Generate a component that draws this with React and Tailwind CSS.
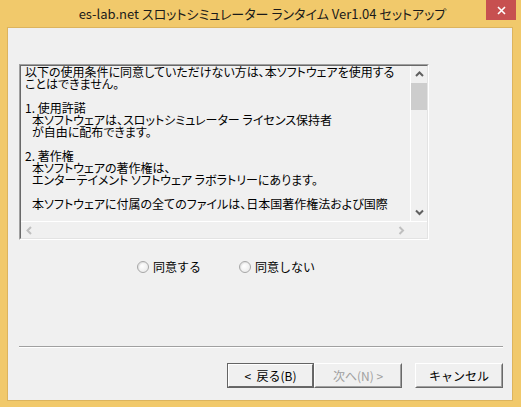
import React from "react";

const jp = { fontFamily: '"Noto Sans CJK JP", "Noto Sans", sans-serif' };

function Chevron({ dir, color }) {
  const paths = {
    up: "M1 5 L4.5 1.5 L8 5",
    down: "M1 1.5 L4.5 5 L8 1.5",
    left: "M5 1 L1.5 4.5 L5 8",
    right: "M1.5 1 L5 4.5 L1.5 8",
  };
  const vert = dir === "up" || dir === "down";
  return (
    <svg width={vert ? 9 : 7} height={vert ? 7 : 9} viewBox={vert ? "0 0 9 7" : "0 0 7 9"}>
      <path d={paths[dir]} fill="none" stroke={color} strokeWidth="2" />
    </svg>
  );
}

function Radio({ label }) {
  return (
    <div className="flex items-center gap-[4px]">
      <div className="w-[12px] h-[12px] rounded-full border border-[#a7a7a7] bg-[radial-gradient(circle_at_40%_40%,#ffffff,#e6e6e6)] shadow-[inset_1px_1px_1px_rgba(0,0,0,0.08)]" />
      <span className="text-[12px] leading-[14px] text-black">{label}</span>
    </div>
  );
}

function Button({ children, variant }) {
  if (variant === "default") {
    return (
      <div className="w-[87px] h-[25px] border border-[#646464]">
        <div className="w-full h-full border border-t-white border-l-white border-r-[#696969] border-b-[#696969] bg-[#f0f0f0] flex items-center justify-center text-[12px] text-black whitespace-pre">
          {children}
        </div>
      </div>
    );
  }
  const disabled = variant === "disabled";
  return (
    <div className="w-[88px] h-[25px] border border-t-white border-l-white border-r-[#696969] border-b-[#696969]">
      <div className={`w-full h-full border border-t-[#f0f0f0] border-l-[#f0f0f0] border-r-[#a0a0a0] border-b-[#a0a0a0] bg-[#f0f0f0] flex items-center justify-center text-[12px] whitespace-pre ${disabled ? "text-[#a0a0a0]" : "text-black"}`}>
        {children}
      </div>
    </div>
  );
}

export default function App() {
  const lines = [
    "以下の使用条件に同意していただけない方は、本ソフトウェアを使用する",
    "ことはできません。",
    "",
    "1. 使用許諾",
    " 本ソフトウェアは、スロットシミュレーター ライセンス保持者",
    " が自由に配布できます。",
    "",
    "2. 著作権",
    " 本ソフトウェアの著作権は、",
    " エンターテイメント ソフトウェア ラボラトリーにあります。",
    "",
    " 本ソフトウェアに付属の全てのファイルは、日本国著作権法および国際",
  ];
  return (
    <div className="w-[521px] h-[407px] bg-[#f1c96b] flex flex-col overflow-hidden" style={jp}>
      {/* Title bar */}
      <div className="h-[27px] relative flex items-center justify-center">
        <span className="text-[13px] text-[#1a1a1a] [font-feature-settings:'palt'] leading-none pb-[1px] pl-[4px]">
          es-lab.net スロットシミュレーター ランタイム Ver1.04 セットアップ
        </span>
        <div className="absolute right-[5px] top-0 w-[30px] h-[20px] bg-[#c75050] flex items-center justify-center">
          <svg width="9" height="9" viewBox="0 0 9 9">
            <path d="M1 1 L8 8 M8 1 L1 8" stroke="white" strokeWidth="1.6" />
          </svg>
        </div>
      </div>

      {/* Client */}
      <div className="ml-[7px] mr-[8px] h-[374px] border border-[#dcb45e] bg-[#f0f0f0] flex flex-col">
        <div className="pl-[11px] pt-[36px]">
          {/* Text box */}
          <div className="w-[410px] h-[176px] border border-t-[#a0a0a0] border-l-[#a0a0a0] border-r-white border-b-white">
            <div className="w-full h-full border border-t-[#696969] border-l-[#696969] border-r-[#e3e3e3] border-b-[#e3e3e3] flex flex-col">
              <div className="flex flex-1 min-h-0">
                <div className="flex-1 pl-[4px] pt-0 overflow-hidden bg-[#f0f0f0]">
                  {lines.map((l, i) => (
                    <div
                      key={i}
                      className={`h-[12px] text-[12px] leading-[12px] whitespace-pre text-black [font-feature-settings:'palt'] ${l.startsWith(" ") ? "pl-[7px]" : ""}`}
                    >
                      {l.trimStart() || "\u00a0"}
                    </div>
                  ))}
                </div>
                {/* vertical scrollbar */}
                <div className="w-[17px] bg-[#f0f0f0] border-l border-white flex flex-col">
                  <div className="h-[17px] flex items-center justify-center">
                    <Chevron dir="up" color="#606060" />
                  </div>
                  <div className="h-[27px] bg-[#cdcdcd]" />
                  <div className="flex-1" />
                  <div className="h-[17px] flex items-center justify-center">
                    <Chevron dir="down" color="#606060" />
                  </div>
                </div>
              </div>
              {/* horizontal scrollbar */}
              <div className="h-[17px] flex bg-[#f0f0f0] border-t border-white">
                <div className="w-[17px] flex items-center justify-center">
                  <Chevron dir="left" color="#bfbfbf" />
                </div>
                <div className="flex-1" />
                <div className="w-[17px] flex items-center justify-center">
                  <Chevron dir="right" color="#bfbfbf" />
                </div>
                <div className="w-[17px] bg-[#f0f0f0]" />
              </div>
            </div>
          </div>
        </div>

        {/* Radios */}
        <div className="flex pl-[129px] mt-[20px] gap-[38px]">
          <Radio label="同意する" />
          <Radio label="同意しない" />
        </div>

        {/* Separator */}
        <div className="ml-[11px] mr-[9px] mt-[72px] border-t border-[#a0a0a0] border-b border-b-white" />

        {/* Buttons */}
        <div className="flex mt-[15px] pl-[219px]">
          <Button variant="default">{"<  戻る(B)"}</Button>
          <Button variant="disabled">{"次へ(N) >"}</Button>
          <div className="w-[13px]" />
          <Button>キャンセル</Button>
        </div>
      </div>
    </div>
  );
}
